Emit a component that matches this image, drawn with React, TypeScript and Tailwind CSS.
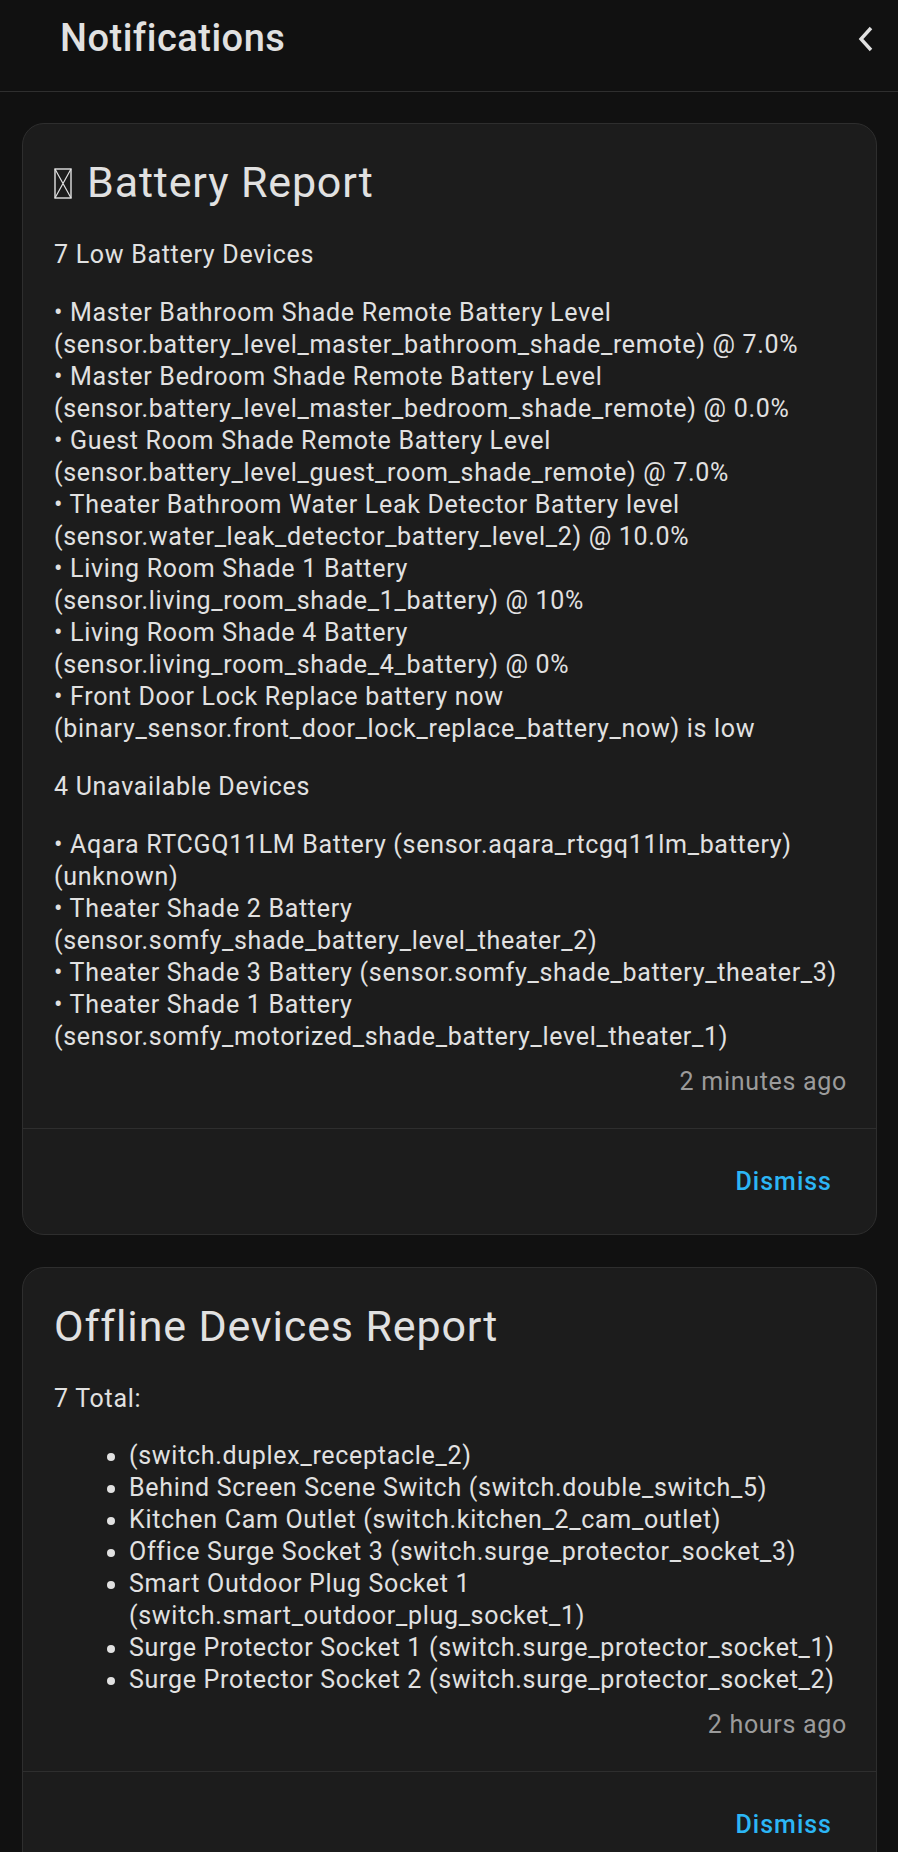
import React from 'react'

type Notification = {
  title: string
  missingGlyph?: boolean
  timestamp: string
  body: React.ReactNode
}

const lowBattery = [
  '• Master Bathroom Shade Remote Battery Level (sensor.battery_level_master_bathroom_shade_remote) @ 7.0%',
  '• Master Bedroom Shade Remote Battery Level (sensor.battery_level_master_bedroom_shade_remote) @ 0.0%',
  '• Guest Room Shade Remote Battery Level (sensor.battery_level_guest_room_shade_remote) @ 7.0%',
  '• Theater Bathroom Water Leak Detector Battery level (sensor.water_leak_detector_battery_level_2) @ 10.0%',
  '• Living Room Shade 1 Battery (sensor.living_room_shade_1_battery) @ 10%',
  '• Living Room Shade 4 Battery (sensor.living_room_shade_4_battery) @ 0%',
  '• Front Door Lock Replace battery now (binary_sensor.front_door_lock_replace_battery_now) is low',
]

const unavailable = [
  '• Aqara RTCGQ11LM Battery (sensor.aqara_rtcgq11lm_battery) (unknown)',
  '• Theater Shade 2 Battery (sensor.somfy_shade_battery_level_theater_2)',
  '• Theater Shade 3 Battery (sensor.somfy_shade_battery_theater_3)',
  '• Theater Shade 1 Battery (sensor.somfy_motorized_shade_battery_level_theater_1)',
]

const offline = [
  '(switch.duplex_receptacle_2)',
  'Behind Screen Scene Switch (switch.double_switch_5)',
  'Kitchen Cam Outlet (switch.kitchen_2_cam_outlet)',
  'Office Surge Socket 3 (switch.surge_protector_socket_3)',
  'Smart Outdoor Plug Socket 1 (switch.smart_outdoor_plug_socket_1)',
  'Surge Protector Socket 1 (switch.surge_protector_socket_1)',
  'Surge Protector Socket 2 (switch.surge_protector_socket_2)',
]

function Lines({ items }: { items: string[] }) {
  return (
    <p className="mb-[26px] last:mb-0">
      {items.map((line, i) => (
        <React.Fragment key={i}>
          {line}
          {i < items.length - 1 && <br />}
        </React.Fragment>
      ))}
    </p>
  )
}

const notifications: Notification[] = [
  {
    title: 'Battery Report',
    missingGlyph: true,
    timestamp: '2 minutes ago',
    body: (
      <>
        <p className="mb-[26px]">7 Low Battery Devices</p>
        <Lines items={lowBattery} />
        <p className="mb-[26px]">4 Unavailable Devices</p>
        <Lines items={unavailable} />
      </>
    ),
  },
  {
    title: 'Offline Devices Report',
    timestamp: '2 hours ago',
    body: (
      <>
        <p className="mb-[25px]">7 Total:</p>
        <ul className="list-disc pl-[75px]">
          {offline.map((item) => (
            <li key={item}>{item}</li>
          ))}
        </ul>
      </>
    ),
  },
]

// stand-in for the emoji the device could not render
function TofuBox() {
  return (
    <svg width="18" height="31" viewBox="0 0 18 31" className="mr-[15px] mt-[2px] shrink-0" aria-hidden>
      <rect x="1" y="1" width="16" height="29" fill="none" stroke="#e1e1e1" strokeWidth="1.4" />
      <path d="M1 1 L17 30 M17 1 L1 30" stroke="#e1e1e1" strokeWidth="1.2" />
    </svg>
  )
}

function NotificationCard({ n }: { n: Notification }) {
  return (
    <div className="rounded-[22px] border border-[#2e2e2e] bg-[#1c1c1c]">
      <div className="px-[31px] pt-[30px] pb-[30px]">
        <h2 className="flex items-center text-[43px] leading-[56px] font-normal tracking-[0.85px] text-[#e1e1e1]">
          {n.missingGlyph && <TofuBox />}
          {n.title}
        </h2>
        <div className="mt-[29px] text-[25px] leading-[32px] tracking-[0.7px] text-[#e1e1e1]">
          {n.body}
        </div>
        <div className="-mr-[2px] mt-[13px] text-right text-[25px] leading-[32px] tracking-[0.7px] text-[#9b9b9b]">
          {n.timestamp}
        </div>
      </div>
      <div className="flex h-[106px] items-center justify-end border-t border-[#2e2e2e] pr-[44px]">
        <button className="text-[25px] font-medium tracking-[1px] text-[#2cb6f5]">Dismiss</button>
      </div>
    </div>
  )
}

export default function App() {
  return (
    <div
      className="min-h-screen bg-[#111111] text-[#e1e1e1]"
      style={{ fontFamily: 'Roboto, "Noto Sans", sans-serif' }}
    >
      <header className="h-[92px] border-b border-[#2f2f2f] bg-[#111111]">
        <div className="flex h-[77px] items-center justify-between pl-[60px] pr-[24px]">
          <h1 className="text-[38px] font-medium tracking-[0.5px] text-[#e1e1e1]">Notifications</h1>
          <svg width="16" height="26" viewBox="0 0 16 26" aria-hidden>
            <polyline
              points="13,2 3,13 13,24"
              fill="none"
              stroke="#e1e1e1"
              strokeWidth="3.4"
              strokeLinejoin="miter"
            />
          </svg>
        </div>
      </header>
      <main className="flex flex-col gap-[32px] pt-[31px] pb-[32px] pl-[22px] pr-[21px]">
        {notifications.map((n) => (
          <NotificationCard key={n.title} n={n} />
        ))}
      </main>
    </div>
  )
}
